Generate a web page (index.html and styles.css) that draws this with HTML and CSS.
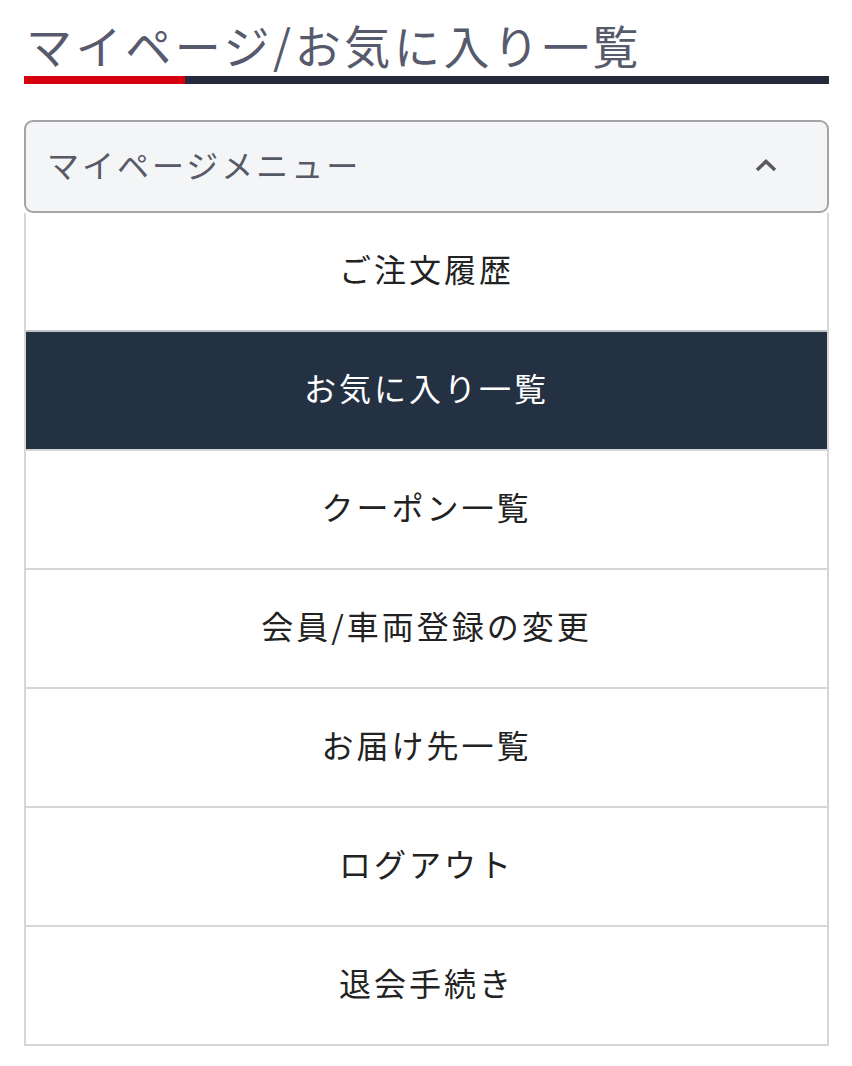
FILE: index.html
```html
<!DOCTYPE html>
<html lang="ja">

<head>
  <meta charset="UTF-8">
  <meta name="viewport" content="width=device-width, initial-scale=1.0">
  <title>マイページ/お気に入り一覧</title>
  <link rel="stylesheet" href="styles.css">
</head>

<body>
  <div class="page">
    <!-- 見出し -->
    <h1 class="page-title">マイページ/お気に入り一覧</h1>

    <!-- マイページメニュー -->
    <div class="mypage-menu">
      <button class="menu-toggle" type="button">
        <span>マイページメニュー</span>
        <svg class="chevron" width="22" height="16" viewBox="0 0 22 16">
          <path d="M2 13 L11 4.5 L20 13" fill="none" stroke="#5a5a5e" stroke-width="3.5" />
        </svg>
      </button>
      <ul class="menu-list">
        <li><a href="#">ご注文履歴</a></li>
        <li class="active"><a href="#">お気に入り一覧</a></li>
        <li><a href="#">クーポン一覧</a></li>
        <li><a href="#">会員/車両登録の変更</a></li>
        <li><a href="#">お届け先一覧</a></li>
        <li><a href="#">ログアウト</a></li>
        <li><a href="#">退会手続き</a></li>
      </ul>
    </div>
  </div>
</body>

</html>
```

FILE: styles.css
```css
/* マイページ共通 */
body {
  margin: 0;
  font-family: "Noto Sans CJK JP", "Noto Sans", sans-serif;
  background: #fff;
}

.page {
  padding: 14px 23px 0 24px;
}

.page-title {
  margin: 0;
  padding: 0 0 2px 2px;
  font-size: 46px;
  font-weight: 400;
  line-height: 60px;
  letter-spacing: 3.6px;
  color: #575a6c;
  border-bottom: 8px solid #242a3b;
  position: relative;
}

/* 下線の赤い部分 */
.page-title::after {
  content: "";
  position: absolute;
  left: 0;
  bottom: -8px;
  width: 161px;
  height: 8px;
  background: #d7000f;
}

.mypage-menu {
  margin-top: 36px;
}

.menu-toggle {
  display: flex;
  align-items: center;
  justify-content: space-between;
  width: 100%;
  height: 93px;
  padding: 0 50px 6px 21px;
  border: 2px solid #a4a4a6;
  border-radius: 9px;
  background: #f4f5f7;
  font-family: inherit;
  font-size: 32px;
  letter-spacing: 3px;
  color: #575a66;
  cursor: pointer;
  box-sizing: border-box;
}

.chevron {
  margin-top: 2px;
}

.menu-list {
  list-style: none;
  margin: 0;
  padding: 0;
  border-left: 2px solid #d6d6d6;
  border-right: 2px solid #d6d6d6;
  border-bottom: 2px solid #d6d6d6;
}

.menu-list li + li {
  border-top: 2px solid #d6d6d6;
}

.menu-list a {
  display: flex;
  align-items: center;
  justify-content: center;
  height: 117px;
  padding-bottom: 7px;
  box-sizing: border-box;
  font-size: 32px;
  letter-spacing: 3px;
  color: #222;
  text-decoration: none;
}

.menu-list li.active {
  border-top-color: #bfc3c8;
}

.menu-list li.active a {
  background: #243143;
  color: #fff;
}
```
